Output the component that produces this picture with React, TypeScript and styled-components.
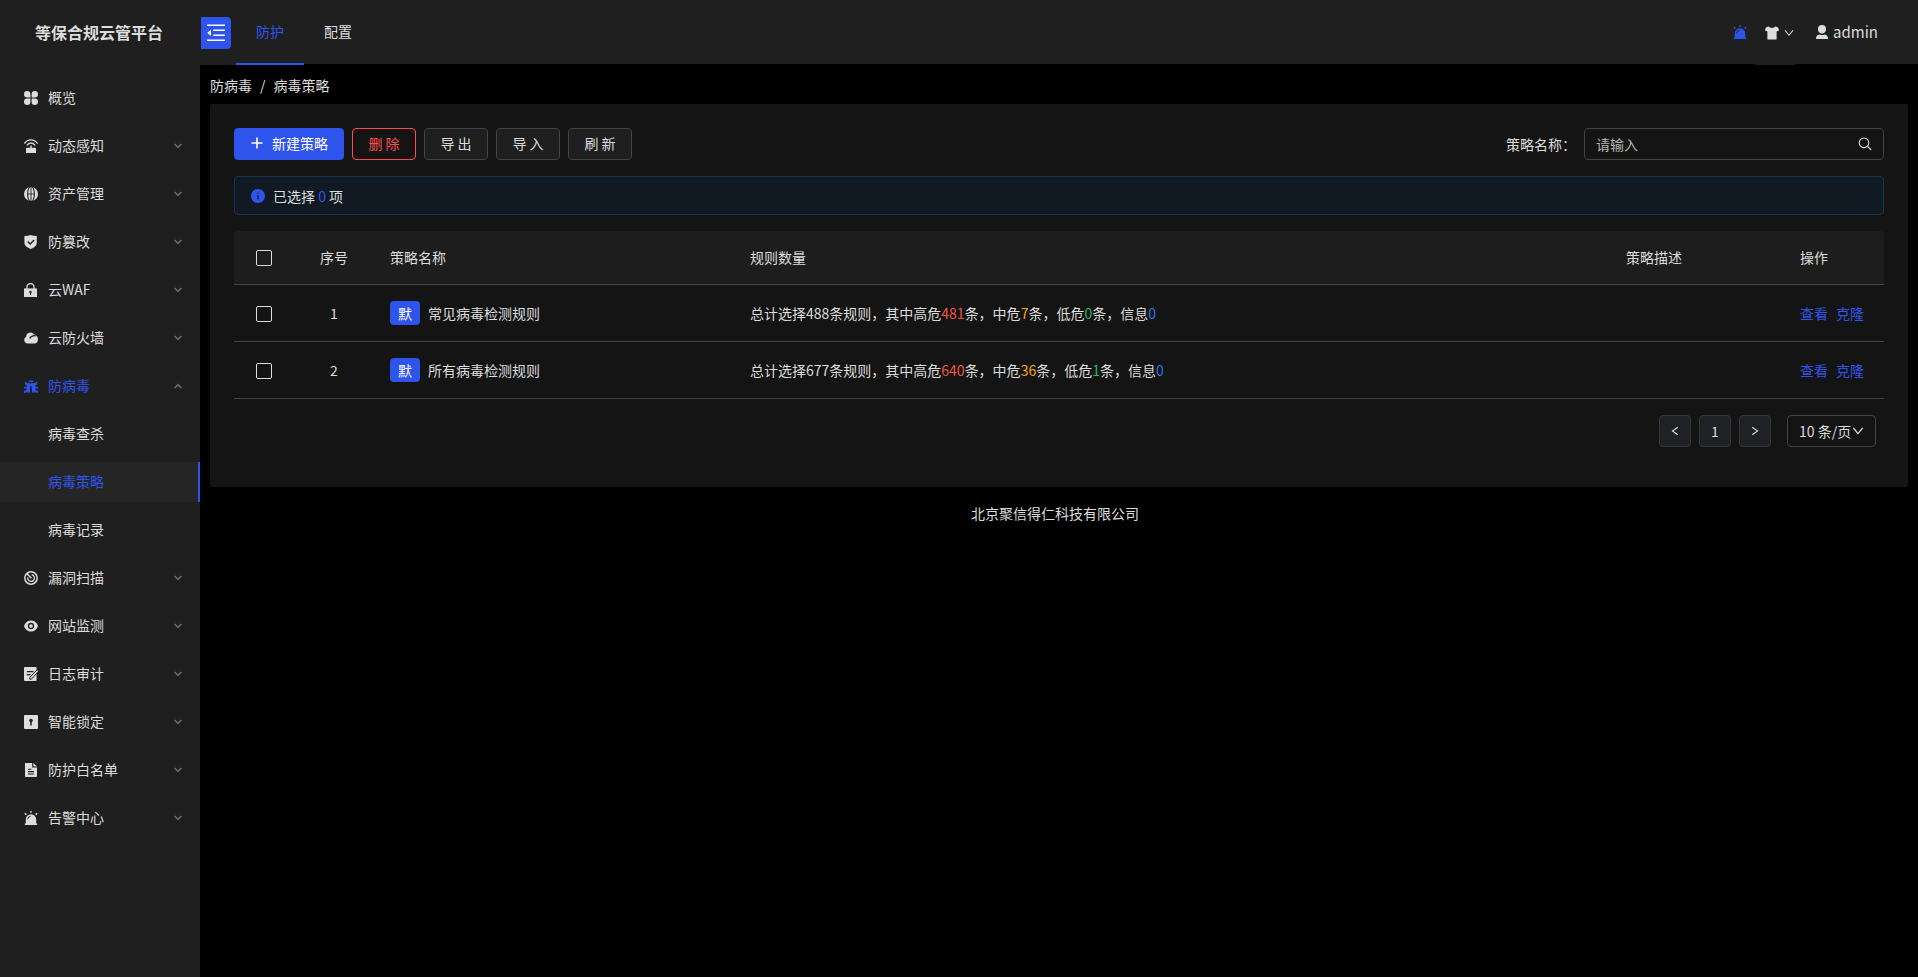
import React, { ReactNode, useState } from "react";
import styled, { createGlobalStyle, css } from "styled-components";

const primary = "#2f54eb";
const panel = "#1f1f1f";
const card = "#141414";
const line = "#434343";
const text = "#dddddd";

const GlobalStyle = createGlobalStyle`
  *, *::before, *::after { box-sizing: border-box; }
  body {
    margin: 0;
    background: #000;
    color: ${text};
    font-family: "Noto Sans CJK SC", sans-serif;
    font-size: 14px;
    line-height: 22px;
  }
  button, input, select { font: inherit; color: inherit; }
  ul { list-style: none; margin: 0; padding: 0; }
  a { text-decoration: none; }
`;

const Page = styled.div`
  display: flex;
  min-height: 100vh;
`;

/* ---------- icons ---------- */

const Svg = styled.svg<{ $size?: number }>`
  display: block;
  flex: none;
  width: ${(p) => p.$size ?? 14}px;
  height: ${(p) => p.$size ?? 14}px;
`;

const Glyph = ({ children, size }: { children: ReactNode; size?: number }) => (
  <Svg viewBox="0 0 14 14" $size={size} fill="currentColor" aria-hidden="true">
    {children}
  </Svg>
);

const icons: Record<string, ReactNode> = {
  grid: (
    <path d="M3.2 0A3.2 3.2 0 0 1 6.4 3.2V6.4H3.2A3.2 3.2 0 0 1 3.2 0ZM10.8 0A3.2 3.2 0 0 1 10.8 6.4H7.6V3.2A3.2 3.2 0 0 1 10.8 0ZM3.2 7.6H6.4V10.8A3.2 3.2 0 1 1 3.2 7.6ZM7.6 7.6H10.8A3.2 3.2 0 1 1 7.6 10.8Z" />
  ),
  sense: (
    <>
      <path d="M2 9.8Q2 8.8 3 8.8H6.3V6.6H7.7V8.8H11Q12 8.8 12 9.8V14H2Z" />
      <g fill="none" stroke="currentColor" strokeWidth="1.3">
        <path d="M.4 4.6C3.6-.4 10.4-.4 13.6 4.6" />
        <path d="M3 6.3C5 3.2 9 3.2 11 6.3" />
      </g>
    </>
  ),
  globe: (
    <>
      <circle cx="7" cy="7" r="7" />
      <g fill="none" stroke={panel} strokeWidth="1.1">
        <ellipse cx="7" cy="7" rx="3.4" ry="7.6" />
        <path d="M7 0V14" strokeWidth=".9" />
        <path d="M4 7H10" strokeWidth=".8" />
      </g>
    </>
  ),
  shield: (
    <>
      <path d="M1 .9Q4 .9 6.5 0Q9 .9 12.8.9V7.6Q12.8 12 6.8 14Q.4 12 .4 7.6V.9Z" />
      <path d="M3.8 6.6L6.1 8.9L10.2 4.9" fill="none" stroke={panel} strokeWidth="1.4" />
    </>
  ),
  lock: (
    <>
      <path d="M0 5.4H13V14H0Z" />
      <path d="M3 6V4A3.5 3.5 0 0 1 10 4V6" fill="none" stroke="currentColor" strokeWidth="1.3" />
      <circle cx="6.5" cy="9" r="1.2" fill={panel} />
      <path d="M6.5 9V12" stroke={panel} strokeWidth="1.2" />
    </>
  ),
  cloud: (
    <>
      <path d="M3.6 12.6A3.6 3.6 0 0 1 2.2 5.8A4.2 4.2 0 0 1 10 3.6A4.6 4.6 0 0 1 13.9 9A3.8 3.8 0 0 1 10.4 12.6Z" />
      <path d="M5.7 7.7Q6.4 5.2 9.9 4.6Q11 4.5 12 5" fill="none" stroke={panel} strokeWidth="1.2" />
    </>
  ),
  bug: (
    <>
      <path d="M4.3 3A2.9 2.9 0 0 1 9.7 3Z" />
      <path d="M2.4 4.2H11.6V13.4H7.9V7.6H6.1V13.4H2.4Z" />
      <path
        d="M1.6 3V5H4M12.4 3V5H10M0 8.8H3M14 8.8H11M.8 14V12.3H3M13.2 14V12.3H11"
        fill="none"
        stroke="currentColor"
        strokeWidth="1.4"
      />
    </>
  ),
  radar: (
    <g fill="none" stroke="currentColor">
      <circle cx="7" cy="7" r="6.2" strokeWidth="1.5" />
      <path d="M7.6 3.7A3.4 3.4 0 1 1 3.7 6.4" strokeWidth="1.3" />
      <path d="M3 2.8L7.4 7.2" strokeWidth="1.5" />
    </g>
  ),
  eye: (
    <>
      <path d="M7 1.6C11 1.6 13 4.4 14 7C13 9.8 11 12.6 7 12.6C3 12.6 1 9.8 0 7C1 4.4 3 1.6 7 1.6Z" />
      <circle cx="7" cy="7" r="2.5" fill="none" stroke={panel} strokeWidth="1.3" />
    </>
  ),
  audit: (
    <>
      <path d="M1 0H11.6Q12.6 0 12.6 1V13Q12.6 14 11.6 14H1Q0 14 0 13V1Q0 0 1 0Z" />
      <path d="M2.8 4.7H9.4M2.8 7.6H6.6" stroke={panel} strokeWidth="1.2" />
      <path d="M14.4 4.4L7.4 12.2H5.8V10.4L12.8 3" fill="currentColor" stroke={panel} strokeWidth="1" />
    </>
  ),
  keyhole: (
    <>
      <rect width="14" height="14" rx="1" />
      <circle cx="7" cy="5.6" r="1.8" fill={panel} />
      <path d="M7 6V10.4" stroke={panel} strokeWidth="1.5" />
    </>
  ),
  doc: (
    <>
      <path d="M1 0H8.2V4.6H13V13Q13 14 12 14H2Q1 14 1 13Z" />
      <path d="M9.4 0L13 3.5H9.4Z" />
      <path d="M4 6.3H7.4M4 8.6H10M4 11H10" stroke={panel} strokeWidth="1.1" />
    </>
  ),
  alarm: (
    <>
      <path d="M1.8 12.6V8.4A5.2 5.2 0 0 1 12.2 8.4V12.6H13.2V14H.8V12.6Z" />
      <path d="M3.7 8.4A3.3 3.3 0 0 1 6.6 5.2" fill="none" stroke={panel} strokeWidth="1" />
      <path
        d="M7 0V1.8M.8 2.2L2.4 3.6M13.2 2.2L11.6 3.6"
        stroke="currentColor"
        strokeWidth="1.4"
      />
    </>
  ),
  shirt: (
    <path d="M3.6.6Q4.6 1.9 7 1.9T10.4.6L13.2 1.4L14 4.6L11.6 5.6V13.4H2.4V5.6L0 4.6L.8 1.4Z" />
  ),
  user: (
    <>
      <path d="M7 0A4 4 0 0 1 11 4A4.2 4.2 0 0 1 7 8.6A4.2 4.2 0 0 1 3 4A4 4 0 0 1 7 0Z" />
      <path d="M1 14Q1 9.8 4.4 9.4Q7 10.4 9.6 9.4Q13 9.8 13 14Z" />
    </>
  ),
  plus: <path d="M7 1.5V12.5M1.5 7H12.5" stroke="currentColor" strokeWidth="1.6" />,
  search: (
    <g fill="none" stroke="currentColor" strokeWidth="1.1">
      <circle cx="6" cy="5.8" r="4.8" />
      <path d="M9.5 9.3L13.2 13" />
    </g>
  ),
  down: <path d="M2.4 4L7 9.6L11.6 4" fill="none" stroke="currentColor" strokeWidth="1.2" />,
  left: <path d="M10.2 2.6L4 7L10.2 11.4" fill="none" stroke="currentColor" strokeWidth="1.2" />,
  right: <path d="M3.8 2.6L10 7L3.8 11.4" fill="none" stroke="currentColor" strokeWidth="1.2" />,
  info: (
    <>
      <circle cx="7" cy="7" r="7" />
      <path d="M7 6V10.6M7 3.4V4.9" stroke="#111a23" strokeWidth="1.2" />
    </>
  ),
  fold: (
    <>
      <path
        d="M0 1H14M4.8 4.9H14M4.8 8.7H14M0 12.6H14"
        stroke="currentColor"
        strokeWidth="1.2"
      />
      <path d="M3 4.4V9.4L.2 6.9Z" />
    </>
  ),
};

/* ---------- sidebar ---------- */

const Sidebar = styled.aside`
  flex: none;
  width: 200px;
  background: ${panel};
`;

const Brand = styled.h1`
  margin: 0 0 13px;
  height: 65px;
  padding-left: 35px;
  font-size: 16px;
  line-height: 64px;
  font-weight: 600;
  white-space: nowrap;
`;

const MenuLink = styled.a<{ $tone?: "active" | "open"; $nested?: boolean }>`
  display: flex;
  align-items: center;
  gap: 10px;
  height: 40px;
  margin-bottom: 8px;
  padding: 0 18px 0 ${(p) => (p.$nested ? 48 : 24)}px;
  color: ${(p) => (p.$tone ? primary : text)};
  ${(p) =>
    p.$tone === "active" &&
    css`
      background: #252525;
      box-shadow: inset -2px 0 ${primary};
    `}
`;

const MenuLabel = styled.span`
  padding-bottom: 2px;
`;

const Caret = styled.svg<{ $up?: boolean }>`
  width: 8px;
  height: 6px;
  margin-left: auto;
  color: #6a6a6a;
  ${(p) => p.$up && css`transform: rotate(180deg);`}
`;

type Item = { icon: string; label: string; leaf?: boolean; children?: string[] };

const menu: Item[] = [
  { icon: "grid", label: "概览", leaf: true },
  { icon: "sense", label: "动态感知" },
  { icon: "globe", label: "资产管理" },
  { icon: "shield", label: "防篡改" },
  { icon: "lock", label: "云WAF" },
  { icon: "cloud", label: "云防火墙" },
  { icon: "bug", label: "防病毒", children: ["病毒查杀", "病毒策略", "病毒记录"] },
  { icon: "radar", label: "漏洞扫描" },
  { icon: "eye", label: "网站监测" },
  { icon: "audit", label: "日志审计" },
  { icon: "keyhole", label: "智能锁定" },
  { icon: "doc", label: "防护白名单" },
  { icon: "alarm", label: "告警中心" },
];

const SideMenu = () => (
  <nav>
    <ul>
      {menu.map((m) => (
        <li key={m.label}>
          <MenuLink href="#" $tone={m.children ? "open" : undefined}>
            <Glyph>{icons[m.icon]}</Glyph>
            <MenuLabel>{m.label}</MenuLabel>
            {!m.leaf && (
              <Caret viewBox="0 0 8 6" $up={!!m.children} aria-hidden="true">
                <path d="M.6 1L4 4.4L7.4 1" fill="none" stroke="currentColor" strokeWidth="1.6" />
              </Caret>
            )}
          </MenuLink>
          {m.children && (
            <ul>
              {m.children.map((c) => (
                <li key={c}>
                  <MenuLink href="#" $nested $tone={c === "病毒策略" ? "active" : undefined}>
                    <MenuLabel>{c}</MenuLabel>
                  </MenuLink>
                </li>
              ))}
            </ul>
          )}
        </li>
      ))}
    </ul>
  </nav>
);

/* ---------- top bar ---------- */

const Main = styled.div`
  flex: 1;
  min-width: 0;
`;

const TopBar = styled.header`
  display: flex;
  justify-content: space-between;
  height: 64px;
  padding-right: 40px;
  background: ${panel};
`;

const TopLeft = styled.div`
  display: flex;
  height: 65px;
`;

const FoldSlot = styled.div`
  display: flex;
  align-items: center;
  padding: 0 5px 0 1px;
  background: ${panel};
`;

const FoldButton = styled.button`
  display: grid;
  place-items: center;
  width: 30px;
  height: 32px;
  padding: 0;
  border: 0;
  border-radius: 0 4px 4px 0;
  background: ${primary};
  color: #fff;
`;

const Tab = styled.a<{ $active?: boolean }>`
  height: 65px;
  padding: 0 20px;
  line-height: 62px;
  color: ${(p) => (p.$active ? primary : text)};
  border-bottom: 2px solid ${(p) => (p.$active ? primary : "transparent")};
`;

const TopRight = styled.div`
  display: flex;
  height: 65px;
`;

const BarButton = styled.button<{ $gap?: number }>`
  display: flex;
  align-items: center;
  gap: ${(p) => p.$gap ?? 0}px;
  height: 100%;
  padding: 0;
  border: 0;
  background: ${panel};
`;

const BellButton = styled(BarButton)`
  color: ${primary};
  margin-right: 8px;
  height: 64px;
`;

const ThemeButton = styled(BarButton)`
  width: 40px;
  padding-left: 10px;
`;

const UserButton = styled(BarButton)`
  height: 64px;
  margin-left: 20px;
  font-size: 15px;
`;

/* ---------- content ---------- */

const Crumbs = styled.nav`
  display: flex;
  gap: 8px;
  padding: 10px 10px 8px;
`;

const Card = styled.section`
  margin: 0 10px 15px;
  padding: 24px 24px 40px;
  border-radius: 2px;
  background: ${card};
`;

const Toolbar = styled.div`
  display: flex;
  align-items: center;
  justify-content: space-between;
  margin-bottom: 16px;
`;

const Actions = styled.div`
  display: flex;
  gap: 8px;
`;

const tones = {
  primary: css`
    background: ${primary};
    border-color: ${primary};
    color: #fff;
  `,
  danger: css`
    background: transparent;
    border-color: #ff4d4f;
    color: #ff4d4f;
  `,
  plain: css`
    background: ${panel};
    border-color: ${line};
  `,
};

const Button = styled.button<{ $tone?: keyof typeof tones }>`
  display: flex;
  align-items: center;
  justify-content: center;
  gap: 8px;
  min-width: 64px;
  height: 32px;
  padding: 0 15px 2px;
  border: 1px solid;
  border-radius: 4px;
  ${(p) => tones[p.$tone ?? "plain"]}
`;

const SearchForm = styled.form`
  display: flex;
  align-items: center;
  gap: 8px;
`;

const SearchBox = styled.div`
  display: flex;
  align-items: center;
  width: 300px;
  height: 32px;
  padding: 0 11px;
  border: 1px solid ${line};
  border-radius: 4px;
`;

const SearchInput = styled.input`
  flex: 1;
  min-width: 0;
  padding: 0;
  border: 0;
  outline: 0;
  background: transparent;
  &::placeholder { color: #b4b4b4; opacity: 1; }
`;

const IconButton = styled.button`
  padding: 0;
  border: 0;
  background: none;
`;

const Notice = styled.div`
  display: flex;
  align-items: center;
  gap: 8px;
  height: 39px;
  margin-bottom: 16px;
  padding: 0 16px;
  border: 1px solid #153450;
  border-radius: 4px;
  background: #111a23;
`;

const NoticeIcon = styled.span`
  color: ${primary};
`;

const Tint = styled.span<{ $color: string }>`
  color: ${(p) => p.$color};
`;

const Table = styled.table`
  width: 100%;
  table-layout: fixed;
  border-collapse: separate;
  border-spacing: 0;
`;

const Col = styled.col<{ $w?: number }>`
  width: ${(p) => (p.$w ? `${p.$w}px` : "auto")};
`;

const cell = css<{ $center?: boolean }>`
  padding: 0 16px;
  text-align: ${(p) => (p.$center ? "center" : "left")};
  border-bottom: 1px solid ${line};
`;

const Th = styled.th<{ $center?: boolean }>`
  ${cell}
  height: 54px;
  font-weight: 400;
  background: #1d1d1d;
  &:not(:first-child) { padding-bottom: 2px; }
  &:first-child { border-top-left-radius: 4px; }
  &:last-child { border-top-right-radius: 4px; }
`;

const Td = styled.td<{ $center?: boolean }>`
  ${cell}
  height: 57px;
  &:first-child { padding-top: 2px; }
`;

const Check = styled.input.attrs({ type: "checkbox" })`
  display: block;
  appearance: none;
  width: 16px;
  height: 16px;
  margin: 0 auto;
  border: 1px solid ${text};
  border-radius: 2px;
  &:checked { background: ${primary}; border-color: ${primary}; }
`;

const NameCell = styled.div`
  display: flex;
  align-items: center;
  gap: 8px;
`;

const Tag = styled.span`
  padding: 0 8px;
  line-height: 24px;
  border-radius: 4px;
  background: ${primary};
  color: #fff;
`;

const Links = styled.div`
  display: flex;
  gap: 8px;
`;

const TextLink = styled.a`
  color: ${primary};
`;

const Pager = styled.nav`
  display: flex;
  justify-content: flex-end;
  gap: 8px;
  padding: 16px 8px 0 0;
`;

const PageButton = styled.button`
  display: grid;
  place-items: center;
  width: 32px;
  height: 32px;
  padding: 0;
  border: 1px solid #363636;
  border-radius: 4px;
  background: #1f2125;
`;

const PageSize = styled.label`
  display: grid;
  align-items: center;
  width: 89px;
  margin-left: 8px;
  & > * { grid-area: 1 / 1; }
  & > svg { justify-self: end; margin-right: 11px; pointer-events: none; }
`;

const PageSelect = styled.select`
  appearance: none;
  width: 100%;
  height: 32px;
  padding: 0 0 0 11px;
  border: 1px solid ${line};
  border-radius: 4px;
  background: ${card};
`;

const Footer = styled.footer`
  padding-right: 8px;
  text-align: center;
`;

const rows = [
  { name: "常见病毒检测规则", total: 488, high: 481, mid: 7, low: 0, info: 0 },
  { name: "所有病毒检测规则", total: 677, high: 640, mid: 36, low: 1, info: 0 },
];

export default function App() {
  const [picked, setPicked] = useState<number[]>([]);
  const toggle = (i: number) =>
    setPicked((p) => (p.includes(i) ? p.filter((x) => x !== i) : [...p, i]));

  return (
    <Page>
      <GlobalStyle />
      <Sidebar>
        <Brand>等保合规云管平台</Brand>
        <SideMenu />
      </Sidebar>
      <Main>
        <TopBar>
          <TopLeft>
            <FoldSlot>
              <FoldButton aria-label="收起菜单">
                <Glyph size={18}>{icons.fold}</Glyph>
              </FoldButton>
            </FoldSlot>
            <Tab href="#" $active>防护</Tab>
            <Tab href="#">配置</Tab>
          </TopLeft>
          <TopRight>
            <BellButton aria-label="告警">
              <Glyph>{icons.alarm}</Glyph>
            </BellButton>
            <ThemeButton $gap={4} aria-label="主题">
              <Glyph>{icons.shirt}</Glyph>
              <Glyph size={12}>{icons.down}</Glyph>
            </ThemeButton>
            <UserButton $gap={4}>
              <Glyph>{icons.user}</Glyph>
              admin
            </UserButton>
          </TopRight>
        </TopBar>

        <Crumbs>
          <span>防病毒</span>
          <span>/</span>
          <span>病毒策略</span>
        </Crumbs>

        <Card>
          <Toolbar>
            <Actions>
              <Button $tone="primary">
                <Glyph>{icons.plus}</Glyph>
                新建策略
              </Button>
              <Button $tone="danger">删 除</Button>
              <Button>导 出</Button>
              <Button>导 入</Button>
              <Button>刷 新</Button>
            </Actions>
            <SearchForm onSubmit={(e) => e.preventDefault()}>
              <label htmlFor="policy">策略名称：</label>
              <SearchBox>
                <SearchInput id="policy" placeholder="请输入" />
                <IconButton aria-label="搜索">
                  <Glyph>{icons.search}</Glyph>
                </IconButton>
              </SearchBox>
            </SearchForm>
          </Toolbar>

          <Notice>
            <NoticeIcon>
              <Glyph>{icons.info}</Glyph>
            </NoticeIcon>
            <span>
              已选择 <Tint $color={primary}>{picked.length}</Tint> 项
            </span>
          </Notice>

          <Table>
            <colgroup>
              <Col $w={60} />
              <Col $w={80} />
              <Col $w={360} />
              <Col />
              <Col $w={174} />
              <Col $w={100} />
            </colgroup>
            <thead>
              <tr>
                <Th $center>
                  <Check
                    aria-label="全选"
                    checked={picked.length === rows.length}
                    onChange={(e) => setPicked(e.target.checked ? rows.map((_, i) => i) : [])}
                  />
                </Th>
                <Th $center>序号</Th>
                <Th>策略名称</Th>
                <Th>规则数量</Th>
                <Th>策略描述</Th>
                <Th>操作</Th>
              </tr>
            </thead>
            <tbody>
              {rows.map((r, i) => (
                <tr key={r.name}>
                  <Td $center>
                    <Check
                      aria-label={r.name}
                      checked={picked.includes(i)}
                      onChange={() => toggle(i)}
                    />
                  </Td>
                  <Td $center>{i + 1}</Td>
                  <Td>
                    <NameCell>
                      <Tag>默</Tag>
                      {r.name}
                    </NameCell>
                  </Td>
                  <Td>
                    总计选择{r.total}条规则，其中高危<Tint $color="#f25643">{r.high}</Tint>条，中危
                    <Tint $color="#f5a70f">{r.mid}</Tint>条，低危
                    <Tint $color="#2bb562">{r.low}</Tint>条，信息
                    <Tint $color="#2878e6">{r.info}</Tint>
                  </Td>
                  <Td />
                  <Td>
                    <Links>
                      <TextLink href="#">查看</TextLink>
                      <TextLink href="#">克隆</TextLink>
                    </Links>
                  </Td>
                </tr>
              ))}
            </tbody>
          </Table>

          <Pager>
            <PageButton aria-label="上一页">
              <Glyph size={12}>{icons.left}</Glyph>
            </PageButton>
            <PageButton>1</PageButton>
            <PageButton aria-label="下一页">
              <Glyph size={12}>{icons.right}</Glyph>
            </PageButton>
            <PageSize>
              <PageSelect aria-label="每页条数" defaultValue="10">
                <option value="10">10 条/页</option>
                <option value="20">20 条/页</option>
              </PageSelect>
              <Glyph>{icons.down}</Glyph>
            </PageSize>
          </Pager>
        </Card>

        <Footer>北京聚信得仁科技有限公司</Footer>
      </Main>
    </Page>
  );
}
